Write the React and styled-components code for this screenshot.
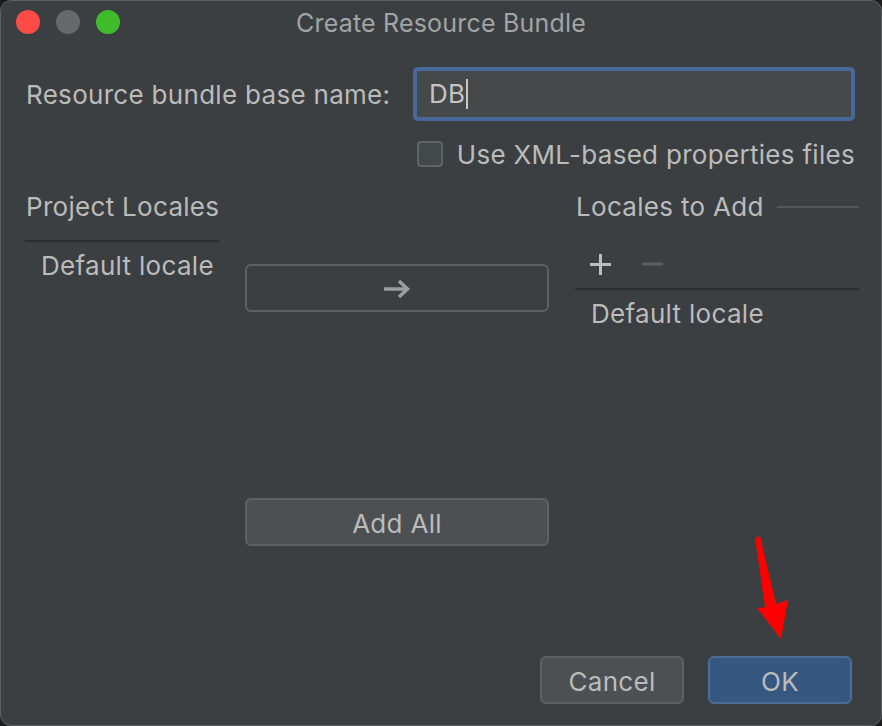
import React from 'react';
import styled, { createGlobalStyle } from 'styled-components';

const GlobalStyle = createGlobalStyle`
  html, body {
    margin: 0;
    padding: 0;
    background: #1c1c1c;
  }
  * {
    box-sizing: border-box;
  }
`;

// Window frame
const Window = styled.div`
  position: relative;
  width: 882px;
  height: 726px;
  display: flex;
  flex-direction: column;
  background: #3c3f41;
  border: 1px solid #5c5f61;
  border-radius: 11px;
  overflow: hidden;
  font-family: 'Inter', 'Liberation Sans', sans-serif;
  font-size: 26px;
  line-height: 30px;
  letter-spacing: 0.3px;
  color: #bbbbbb;
  white-space: nowrap;
`;

const TitleBar = styled.div`
  position: relative;
  height: 43px;
  display: flex;
  align-items: center;
  justify-content: center;
  flex-shrink: 0;
`;

const Lights = styled.div`
  position: absolute;
  left: 15px;
  top: 9px;
  display: flex;
  gap: 16px;
`;

const Light = styled.span`
  width: 24px;
  height: 24px;
  border-radius: 50%;
  background: ${(p) => p.color};
`;

const Title = styled.div`
  color: #a2a4a6;
  font-size: 25px;
  letter-spacing: 0.2px;
`;

const Body = styled.div`
  flex: 1;
  display: flex;
  flex-direction: column;
  padding: 23px 26px 0 24px;
`;

// Name row
const NameRow = styled.div`
  display: flex;
  align-items: center;
  justify-content: space-between;
`;

const Label = styled.label`
  padding: 2px 0 0 1px;
`;

const NameInput = styled.div`
  width: 442px;
  height: 54px;
  border: 4px solid #46699a;
  border-radius: 5px;
  background: #45494a;
  display: flex;
  align-items: center;
  padding-left: 12px;
  color: #c4c4c4;
`;

const Caret = styled.span`
  display: inline-block;
  width: 2px;
  height: 30px;
  margin-left: 1px;
  background: #c8c8c8;
`;

const CheckRow = styled.div`
  display: flex;
  justify-content: flex-end;
  align-items: center;
  gap: 14px;
  margin-top: 18px;
  line-height: 32px;
`;

const CheckBox = styled.span`
  width: 26px;
  height: 26px;
  margin-top: -2px;
  border: 2px solid #5f6365;
  border-radius: 4px;
  background: #43494a;
`;

// Locale columns
const Columns = styled.div`
  display: grid;
  grid-template-columns: 194px 304px 284px;
  column-gap: 26px;
  margin-top: 21px;
`;

const Column = styled.div`
  display: flex;
  flex-direction: column;
`;

const Header = styled.div`
  display: flex;
  align-items: center;
  gap: 13px;
  height: 30px;
  line-height: 32px;
  padding-left: 1px;
`;

const HeaderRule = styled.span`
  flex: 1;
  height: 2px;
  background: #535658;
`;

const Separator = styled.div`
  height: 2px;
  background: #2b2d2e;
  margin-top: ${(p) => p.top}px;
`;

const Item = styled.div`
  height: 30px;
  line-height: 32px;
  margin-top: 8px;
  padding-left: ${(p) => p.indent}px;
`;

const Toolbar = styled.div`
  display: flex;
  align-items: center;
  gap: 31px;
  height: 48px;
  margin-top: 18px;
  padding-left: 15px;
`;

const ToolIcon = styled.svg`
  width: 21px;
  height: 21px;
  stroke: ${(p) => (p.dim ? '#5a5c5e' : '#bdbdbd')};
  stroke-width: 3;
`;

const Button = styled.button`
  width: ${(p) => p.w}px;
  height: 48px;
  display: flex;
  align-items: center;
  justify-content: center;
  border-radius: 6px;
  font-family: inherit;
  font-size: 26px;
  letter-spacing: 0.3px;
  color: #bbbbbb;
  border: 2px solid ${(p) => (p.primary ? '#4a6d94' : '#5e6162')};
  background: ${(p) => (p.primary ? '#365880' : p.flat ? 'transparent' : '#4c5052')};
  padding: 2px 0 0;
`;

const MidButton = styled(Button)`
  margin-top: ${(p) => p.top}px;
`;

const Footer = styled.div`
  display: flex;
  justify-content: flex-end;
  gap: 24px;
  padding: 0 29px 21px 0;
`;

const Annotation = styled.svg`
  position: absolute;
  left: 0;
  top: 0;
  width: 882px;
  height: 726px;
  pointer-events: none;
`;

export default function App() {
  return (
    <>
      <GlobalStyle />
      <Window>
        <TitleBar>
          <Lights>
            <Light color="#fe4b47" />
            <Light color="#66686b" />
            <Light color="#40bb2c" />
          </Lights>
          <Title>Create Resource Bundle</Title>
        </TitleBar>
        <Body>
          <NameRow>
            <Label>Resource bundle base name:</Label>
            <NameInput>
              DB<Caret />
            </NameInput>
          </NameRow>
          <CheckRow>
            <CheckBox />
            <span>Use XML-based properties files</span>
          </CheckRow>
          <Columns>
            <Column>
              <Header>Project Locales</Header>
              <Separator top={18} />
              <Item indent={16}>Default locale</Item>
            </Column>
            <Column>
              <MidButton w={304} flat top={72}>
                <svg width="28" height="22" viewBox="0 0 28 22" fill="none" stroke="#9d9d9d" strokeWidth="3.5">
                  <path d="M1 11 H25" />
                  <path d="M16 3 L24.5 11 L16 19" />
                </svg>
              </MidButton>
              <MidButton w={304} top={186}>Add All</MidButton>
            </Column>
            <Column>
              <Header>
                Locales to Add
                <HeaderRule />
              </Header>
              <Toolbar>
                <ToolIcon viewBox="0 0 21 21">
                  <path d="M10.5 0 V21 M0 10.5 H21" />
                </ToolIcon>
                <ToolIcon viewBox="0 0 21 21" dim>
                  <path d="M0 10 H21" />
                </ToolIcon>
              </Toolbar>
              <Separator top={0} />
              <Item indent={16}>Default locale</Item>
            </Column>
          </Columns>
        </Body>
        <Footer>
          <Button w={144}>Cancel</Button>
          <Button w={144} primary>OK</Button>
        </Footer>
        <Annotation viewBox="0 0 882 726">
          <polygon points="754,537 759,535 775,603 787,599 780,638 756,607 764,606" fill="#ff0000" />
        </Annotation>
      </Window>
    </>
  );
}
